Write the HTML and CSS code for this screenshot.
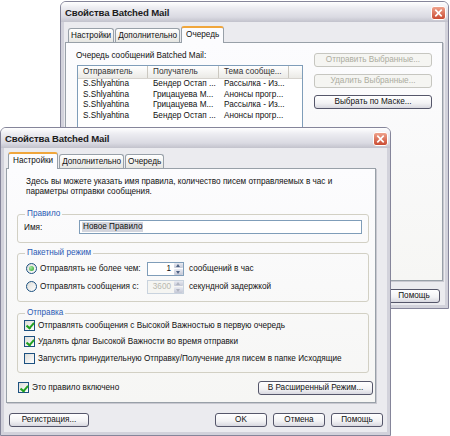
FILE: index.html
```html
<!DOCTYPE html>
<html lang="ru">
<head>
    <meta charset="UTF-8">
    <title>Свойства Batched Mail</title>
    <link rel="stylesheet" href="styles.css">
</head>
<body>
<div class="desk">
    <!-- back window: queue tab -->
    <div class="win win-back">
        <div class="titlebar">
            <span class="title">Свойства Batched Mail</span>
            <svg class="close" viewBox="0 0 15 14">
                <defs>
                    <linearGradient id="cg1" x1="0" y1="0" x2="0" y2="1">
                        <stop offset="0" stop-color="#f0a58f"/>
                        <stop offset="1" stop-color="#c8472e"/>
                    </linearGradient>
                </defs>
                <rect x="0.5" y="0.5" width="14" height="13" rx="2.5" fill="url(#cg1)" stroke="#fff"/>
                <path d="M4.3 3.6 L10.7 10.4 M10.7 3.6 L4.3 10.4" stroke="#fff" stroke-width="1.6"/>
            </svg>
        </div>
        <div class="frame frame-back">
            <div class="tabs">
                <span class="tab">Настройки</span>
                <span class="tab">Дополнительно</span>
                <span class="tab sel">Очередь</span>
            </div>
            <div class="panel panel-queue">
                <div class="queue-left">
                    <div class="q-label">Очередь сообщений Batched Mail:</div>
                    <div class="list">
                        <div class="list-head">
                            <span class="col c1">Отправитель</span>
                            <span class="col c2">Получатель</span>
                            <span class="col c3">Тема сообще...</span>
                            <span class="col c4"></span>
                        </div>
                        <div class="list-row"><span class="c1">S.Shlyahtina</span><span class="c2">Бендер Остап ...</span><span class="c3">Рассылка - Из...</span></div>
                        <div class="list-row"><span class="c1">S.Shlyahtina</span><span class="c2">Грицацуева М...</span><span class="c3">Анонсы прогр...</span></div>
                        <div class="list-row"><span class="c1">S.Shlyahtina</span><span class="c2">Грицацуева М...</span><span class="c3">Рассылка - Из...</span></div>
                        <div class="list-row"><span class="c1">S.Shlyahtina</span><span class="c2">Бендер Остап ...</span><span class="c3">Анонсы прогр...</span></div>
                    </div>
                </div>
                <div class="queue-btns">
                    <button type="button" class="btn btn-wide" disabled>Отправить Выбранные...</button>
                    <button type="button" class="btn btn-wide" disabled>Удалить Выбранные...</button>
                    <button type="button" class="btn btn-wide">Выбрать по Маске...</button>
                </div>
            </div>
            <div class="foot foot-back">
                <button type="button" class="btn btn-small">Помощь</button>
            </div>
        </div>
    </div>

    <!-- front window: settings tab -->
    <div class="win win-front">
        <div class="titlebar">
            <span class="title">Свойства Batched Mail</span>
            <svg class="close" viewBox="0 0 15 14">
                <defs>
                    <linearGradient id="cg2" x1="0" y1="0" x2="0" y2="1">
                        <stop offset="0" stop-color="#f0a58f"/>
                        <stop offset="1" stop-color="#c8472e"/>
                    </linearGradient>
                </defs>
                <rect x="0.5" y="0.5" width="14" height="13" rx="2.5" fill="url(#cg2)" stroke="#fff"/>
                <path d="M4.3 3.6 L10.7 10.4 M10.7 3.6 L4.3 10.4" stroke="#fff" stroke-width="1.6"/>
            </svg>
        </div>
        <div class="frame frame-front">
            <div class="tabs">
                <span class="tab sel">Настройки</span>
                <span class="tab">Дополнительно</span>
                <span class="tab">Очередь</span>
            </div>
            <div class="panel panel-settings">
                <p class="desc">Здесь вы можете указать имя правила, количество писем отправляемых в час и<br>параметры отправки сообщения.</p>

                <fieldset class="group group-rule">
                    <legend>Правило</legend>
                    <div class="row">
                        <span class="name-label">Имя:</span>
                        <div class="edit"><span class="edit-sel">Новое Правило</span></div>
                    </div>
                </fieldset>

                <fieldset class="group group-batch">
                    <legend>Пакетный режим</legend>
                    <div class="row">
                        <span class="radio on"></span>
                        <span class="opt-text">Отправлять не более чем:</span>
                        <div class="spin">
                            <span class="spin-val">1</span>
                            <span class="spin-arr"><i class="up"></i><i class="down"></i></span>
                        </div>
                        <span class="unit">сообщений в час</span>
                    </div>
                    <div class="row">
                        <span class="radio"></span>
                        <span class="opt-text">Отправлять сообщения с:</span>
                        <div class="spin spin-dis">
                            <span class="spin-val">3600</span>
                            <span class="spin-arr"><i class="up"></i><i class="down"></i></span>
                        </div>
                        <span class="unit">секундной задержкой</span>
                    </div>
                </fieldset>

                <fieldset class="group group-send">
                    <legend>Отправка</legend>
                    <div class="row"><span class="chk on"></span>Отправлять сообщения с Высокой Важностью в первую очередь</div>
                    <div class="row"><span class="chk on"></span>Удалять флаг Высокой Важности во время отправки</div>
                    <div class="row"><span class="chk"></span>Запустить принудительную Отправку/Получение для писем в папке Исходящие</div>
                </fieldset>

                <div class="row enable-row">
                    <span class="chk on"></span>
                    <span class="enable-text">Это правило включено</span>
                    <button type="button" class="btn btn-adv">В Расширенный Режим...</button>
                </div>
            </div>
            <div class="foot foot-front">
                <button type="button" class="btn btn-reg">Регистрация...</button>
                <span class="spacer"></span>
                <button type="button" class="btn btn-small">OK</button>
                <button type="button" class="btn btn-small">Отмена</button>
                <button type="button" class="btn btn-small">Помощь</button>
            </div>
        </div>
    </div>
</div>
</body>
</html>
```

FILE: styles.css
```css
body {
    margin: 0;
    background: #ffffff;
    font-family: "Liberation Sans", Arial, sans-serif;
    font-size: 8.2px;
    color: #111;
}
* {
    box-sizing: border-box;
}
.desk {
    position: relative;
    width: 450px;
    height: 436px;
    overflow: hidden;
}

/* windows */
.win {
    position: absolute;
    display: flex;
    flex-direction: column;
    border: 1px solid #85859a;
    border-radius: 6px 6px 0 0;
    background: #ebebef;
}
.win-back {
    left: 60px;
    top: 1px;
    width: 389px;
    height: 308px;
}
.win-front {
    left: 0;
    top: 127px;
    width: 391px;
    height: 309px;
}
.titlebar {
    height: 20px;
    flex: none;
    display: flex;
    align-items: center;
    justify-content: space-between;
    padding: 0 2px 0 4px;
    border-radius: 5px 5px 0 0;
    background: linear-gradient(#ffffff, #ececf1 30%, #dadae2 75%, #c2c2cc);
}
.title {
    font-weight: bold;
    font-size: 9.6px;
    letter-spacing: -0.15px;
    color: #1c1c1c;
}
.close {
    width: 15px;
    height: 14px;
    margin-top: 1px;
}
.frame {
    flex: 1;
    display: flex;
    flex-direction: column;
    border: 3px solid #d2d2db;
    border-top: 0;
    background: #ebebef;
}

/* tabs */
.tabs {
    display: flex;
    align-items: flex-end;
    height: 16px;
    flex: none;
    position: relative;
    z-index: 1;
}
.tab {
    height: 14px;
    padding: 0 2px;
    line-height: 13px;
    border: 1px solid #98a0a8;
    border-bottom: 0;
    border-radius: 3px 3px 0 0;
    background: linear-gradient(#ffffff, #e6e6e2);
    margin-right: 1px;
    white-space: nowrap;
}
.tab.sel {
    height: 17px;
    margin-bottom: -1px;
    padding: 0 4px;
    line-height: 14px;
    background: #fcfcfe;
    border-top: 2px solid #f0a63c;
}

/* tab panel */
.panel {
    border: 1px solid #98a0a8;
    background: linear-gradient(#fcfcfe, #f6f6f4);
    box-shadow: 1px 1px 0 #c8c8d0;
}

/* back window content */
.frame-back {
    padding: 4px 0 0 1px;
}
.frame-back .tabs {
    margin-left: 3px;
}
.panel-queue {
    height: 239px;
    margin-right: 2px;
    display: flex;
    padding: 8px 0 0 11px;
}
.queue-left {
    width: 226px;
}
.q-label {
    line-height: 10px;
    height: 14px;
    margin-left: -1px;
}
.list {
    height: 90px;
    border: 1px solid #7f9db9;
    background: #fff;
}
.list-head {
    display: flex;
    height: 13px;
    background: linear-gradient(#ffffff, #ebeae6);
    border-bottom: 1px solid #d6d3ce;
    line-height: 12px;
    color: #333;
}
.list-head .col {
    border-right: 1px solid #cbc8c0;
    padding-left: 5px;
    white-space: nowrap;
    overflow: hidden;
}
.c1 { width: 70px; }
.c2 { width: 71px; }
.c3 { width: 70px; }
.list-head .c4 {
    flex: 1;
    border-right: 0;
}
.list-row {
    display: flex;
    height: 10.5px;
    line-height: 10.5px;
    white-space: nowrap;
}
.list-row span {
    padding-left: 5px;
    overflow: hidden;
}
.queue-btns {
    display: flex;
    flex-direction: column;
    gap: 7px;
    margin-left: 11px;
    padding-top: 2px;
}
.foot-back {
    display: flex;
    justify-content: flex-end;
    padding: 8px 5px 0 0;
}

/* buttons */
.btn {
    font-family: inherit;
    font-size: inherit;
    color: #111;
    height: 14px;
    padding: 0;
    border: 1px solid #55566a;
    border-radius: 3px;
    background: linear-gradient(#ffffff, #f2f2f4 60%, #d8d8e0);
    line-height: 12px;
    white-space: nowrap;
}
.btn:disabled {
    color: #acaca0;
    border-color: #c6c6c0;
    background: #f5f5f2;
}
.btn-wide { width: 118px; }
.btn-small { width: 52px; }
.btn-reg { width: 80px; }
.btn-adv {
    width: 115px;
    margin-left: auto;
    margin-right: -4px;
}

/* front window content */
.frame-front {
    padding: 4px 0 0 2px;
}
.frame-front .tabs {
    margin-left: 2px;
}
.panel-settings {
    width: 370px;
    height: 235px;
    padding: 0 6px 0 10px;
    display: flex;
    flex-direction: column;
}
.desc {
    margin: 8px 0 0 9px;
    line-height: 10px;
}
.group {
    margin: 0;
    padding: 0 6px;
    border: 1px solid #d2d0c4;
    border-radius: 3px;
}
.group legend {
    padding: 0 2px;
    margin-left: 1px;
    line-height: 10px;
    color: #2c5bb4;
}
.row {
    display: flex;
    align-items: center;
    white-space: nowrap;
}
.group-rule {
    margin-top: 12px;
    padding-top: 1px;
    padding-bottom: 8px;
}
.name-label {
    width: 55px;
    flex: none;
}
.edit {
    flex: 1;
    height: 14px;
    border: 1px solid #7f9db9;
    background: #fff;
    padding: 1px 2px;
}
.edit-sel {
    display: inline-block;
    line-height: 10px;
    padding: 0 1px;
    background: #d3d5dd;
}
.group-batch {
    margin-top: 5px;
    padding-top: 1px;
    padding-bottom: 6px;
}
.group-batch .row {
    height: 17px;
    margin-top: 1px;
}
.radio {
    width: 11px;
    height: 11px;
    flex: none;
    border: 1px solid #1c5180;
    border-radius: 50%;
    background: linear-gradient(135deg, #dcdcd7, #ffffff);
    margin: 0 3px 0 2px;
    display: flex;
    align-items: center;
    justify-content: center;
}
.radio.on::after {
    content: "";
    width: 5px;
    height: 5px;
    border-radius: 50%;
    background: radial-gradient(circle at 35% 35%, #a8e8a0, #21a121);
}
.opt-text {
    width: 107px;
    flex: none;
}
.spin {
    width: 37px;
    height: 14px;
    flex: none;
    border: 1px solid #7f9db9;
    background: #fff;
    display: flex;
    margin-right: 5px;
}
.spin-val {
    flex: 1;
    text-align: right;
    padding-right: 2px;
    line-height: 12px;
}
.spin-arr {
    width: 10px;
    display: flex;
    flex-direction: column;
    gap: 1px;
    padding: 0 0 0 1px;
}
.spin-arr i {
    flex: 1;
    border-radius: 1px;
    background: linear-gradient(#e8eaf2, #c4c8d6);
    position: relative;
}
.spin-arr i::after {
    content: "";
    position: absolute;
    left: 2px;
    border-left: 2.5px solid transparent;
    border-right: 2.5px solid transparent;
}
.spin-arr .up::after {
    top: 1.5px;
    border-bottom: 3px solid #4d6185;
}
.spin-arr .down::after {
    top: 1.5px;
    border-top: 3px solid #4d6185;
}
.spin-dis {
    border-color: #c9d3de;
    background: #f5f5f2;
    color: #b8b8b0;
}
.spin-dis .spin-arr i::after {
    border-bottom-color: #b0b4c0;
    border-top-color: #b0b4c0;
}
.group-send {
    margin-top: 6px;
    padding-top: 0;
    padding-bottom: 5px;
}
.group-send .row {
    height: 16.5px;
}
.group-send .row:first-of-type {
    margin-top: -1px;
}
.chk {
    width: 11px;
    height: 11px;
    flex: none;
    border: 1px solid #1c5180;
    background: linear-gradient(135deg, #dcdcd7, #ffffff);
    margin-right: 3px;
    position: relative;
}
.chk.on::after {
    content: "";
    position: absolute;
    left: 2.5px;
    top: 0.5px;
    width: 3px;
    height: 5.5px;
    border-right: 2px solid #21a121;
    border-bottom: 2px solid #21a121;
    transform: rotate(40deg);
}
.enable-row {
    margin-top: 8px;
    margin-left: 1px;
}
.foot-front {
    display: flex;
    gap: 6px;
    padding: 10px 4px 0 3px;
}
.spacer {
    flex: 1;
}
```
